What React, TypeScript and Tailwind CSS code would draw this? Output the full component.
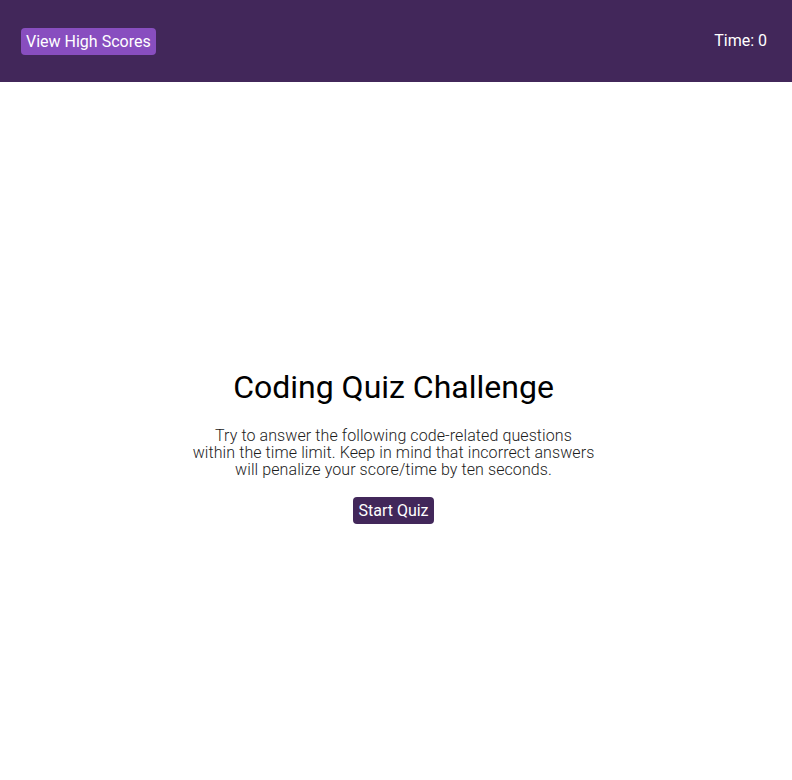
export default function App() {
  return (
    <div className="min-h-[780px] bg-white font-['Roboto',sans-serif]">
      <header className="flex h-[82px] items-center justify-between bg-[#42275a] pl-[21px] pr-[25px]">
        <button className="rounded-[4px] bg-[#884ebf] px-[5px] py-[3px] text-[16px] leading-[21px] font-normal text-white">
          View High Scores
        </button>
        <div className="text-[16px] text-white">Time: 0</div>
      </header>
      <main className="flex flex-col items-center pr-[5px] pt-[286px] text-center">
        <h1 className="text-[32px] leading-[38px] font-normal text-black">Coding Quiz Challenge</h1>
        <p className="mt-[21px] text-[16px] leading-[17px] font-light tracking-[0.09px] text-[#1c1c1c]">
          Try to answer the following code-related questions
          <br />
          within the time limit. Keep in mind that incorrect answers
          <br />
          will penalize your score/time by ten seconds.
        </p>
        <button className="mt-[19px] rounded-[4px] bg-[#42275a] px-[5px] py-[3px] text-[16px] leading-[21px] font-normal text-white">
          Start Quiz
        </button>
      </main>
    </div>
  );
}
